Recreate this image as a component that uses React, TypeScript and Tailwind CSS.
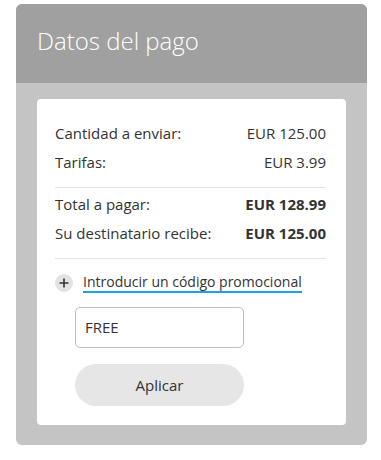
import React from "react";

export default function App() {
  const font = { fontFamily: '"Open Sans", "Noto Sans", sans-serif' };
  return (
    <div className="w-[381px] h-[460px] bg-white pt-[4px] pl-[16px]" style={font}>
      <div className="w-[351px] rounded-[6px] overflow-hidden bg-[#c4c4c4]">
        <div className="h-[79px] bg-[#a0a0a0] flex items-center px-[21px] pb-[6px]">
          <h1 className="text-[24px] font-light text-white leading-none">Datos del pago</h1>
        </div>
        <div className="pt-[16px] px-[21px] pb-[20px]">
          <div className="bg-white rounded-[4px] pt-[20px] pb-[19px] pl-[18px] pr-[20px] text-[15px] text-[#333]">
            <div className="flex justify-between items-center h-[29px]">
              <span>Cantidad a enviar:</span>
              <span>EUR 125.00</span>
            </div>
            <div className="flex justify-between items-center h-[29px]">
              <span>Tarifas:</span>
              <span>EUR 3.99</span>
            </div>
            <div className="mt-[10px] border-t border-[#e3e3e3] pt-[2px]">
              <div className="flex justify-between items-center h-[29px]">
                <span>Total a pagar:</span>
                <span className="font-bold">EUR 128.99</span>
              </div>
              <div className="flex justify-between items-center h-[29px]">
                <span>Su destinatario recibe:</span>
                <span className="font-bold">EUR 125.00</span>
              </div>
            </div>
            <div className="mt-[10px] border-t border-[#e3e3e3] pt-[14px]">
              <div className="flex items-center gap-[10px] pl-0">
                <span className="w-[18px] h-[18px] rounded-full bg-[#e3e3e3] flex items-center justify-center">
                  <svg width="10" height="10" viewBox="0 0 10 10">
                    <path d="M5 0.5V9.5M0.5 5H9.5" stroke="#333" strokeWidth="1.6" />
                  </svg>
                </span>
                <span className="text-[14px] text-[#333] border-b-2 border-[#1aa3dd] leading-[18px]">
                  Introducir un código promocional
                </span>
              </div>
              <div className="pl-[20px] mt-[14px]">
                <div className="w-[169px] h-[41px] border border-[#bdbdbd] rounded-[5px] flex items-center px-[9px] text-[15px] text-[#333]">
                  FREE
                </div>
                <button className="mt-[16px] w-[169px] h-[42px] rounded-full bg-[#e6e6e6] text-[15px] text-[#333]">
                  Aplicar
                </button>
              </div>
            </div>
          </div>
        </div>
      </div>
    </div>
  );
}
